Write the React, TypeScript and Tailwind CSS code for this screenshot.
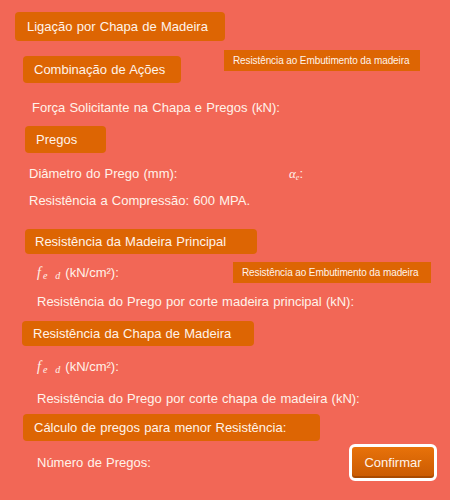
const sans = { fontFamily: '"Liberation Sans", Arial, sans-serif', wordSpacing: "0.6px" };

function Box({ className, children }: { className: string; children: React.ReactNode }) {
  return (
    <div className={"flex items-center whitespace-nowrap rounded-[4px] bg-[#dd6503] text-[13px] text-[#fff3ea] " + className}>
      {children}
    </div>
  );
}

function Tag({ className }: { className: string }) {
  return (
    <div
      className={"flex h-[21px] items-center whitespace-nowrap bg-[#dd6503] pl-[9px] text-[10px] tracking-[-0.1px] text-[#fff3ea] " + className}
      style={{ wordSpacing: "0px" }}
    >
      Resistência ao Embutimento da madeira
    </div>
  );
}

function Line({ className, children }: { className: string; children: React.ReactNode }) {
  return <div className={"flex items-center whitespace-nowrap text-[13px] text-[#fff3ea] " + className}>{children}</div>;
}

function Fed() {
  return (
    <span className="flex items-baseline">
      <span className="font-['Liberation_Serif'] text-[14px] italic">f</span>
      <span className="ml-[2px] translate-y-[2px] font-['Liberation_Serif'] text-[10px] italic">e</span>
      <span className="ml-[8px] translate-y-[2px] font-['Liberation_Serif'] text-[10px] italic">d</span>
      <span className="ml-[5px]">(kN/cm²):</span>
    </span>
  );
}

export default function App() {
  return (
    <div className="h-[500px] w-[450px] overflow-hidden bg-[#f26756]" style={sans}>
      <div className="pt-[12px]">
        <Box className="ml-[15px] h-[29px] w-[210px] pl-[12px]">Ligação por Chapa de Madeira</Box>

        <div className="mt-[9px] flex items-start">
          <Box className="ml-[23px] mt-[6px] h-[27px] w-[158px] pl-[11px]">Combinação de Ações</Box>
          <Tag className="ml-[43px] w-[196px]" />
        </div>

        <Line className="ml-[32px] mt-[17px] h-[16px]">Força Solicitante na Chapa e Pregos (kN):</Line>

        <Box className="ml-[25px] mt-[10px] h-[27px] w-[81px] pl-[11px]">Pregos</Box>

        <Line className="ml-[29px] mt-[13px] h-[16px]">
          <span className="w-[260px]">Diâmetro do Prego (mm):</span>
          <span className="flex items-baseline">
            <span className="font-['Liberation_Serif'] text-[13px] italic">α</span>
            <span className="translate-y-[2px] font-['Liberation_Serif'] text-[8px] italic">e</span>
            <span>:</span>
          </span>
        </Line>

        <Line className="ml-[29px] mt-[11px] h-[16px]">Resistência a Compressão: 600 MPA.</Line>

        <Box className="ml-[25px] mt-[20px] h-[25px] w-[232px] pl-[10px]">Resistência da Madeira Principal</Box>

        <div className="mt-[8px] flex h-[21px] items-center">
          <Line className="ml-[37px] w-[196px]">
            <Fed />
          </Line>
          <Tag className="w-[198px]" />
        </div>

        <Line className="ml-[37px] mt-[11px] h-[16px]">Resistência do Prego por corte madeira principal (kN):</Line>

        <Box className="ml-[22px] mt-[11px] h-[25px] w-[232px] pl-[11px]">Resistência da Chapa de Madeira</Box>

        <Line className="ml-[37px] mt-[12px] h-[16px]">
          <Fed />
        </Line>

        <Line className="ml-[37px] mt-[17px] h-[16px]">Resistência do Prego por corte chapa de madeira (kN):</Line>

        <Box className="ml-[23px] mt-[7px] h-[27px] w-[297px] pl-[11px]">Cálculo de pregos para menor Resistência:</Box>

        <div className="mt-[3px] flex h-[37px] items-center">
          <Line className="ml-[37px] w-[312px]">Número de Pregos:</Line>
          <button className="h-[37px] w-[88px] rounded-[6px] border-[3px] border-white bg-gradient-to-b from-[#e8720a] to-[#c95a02] text-[13px] text-[#fff3ea] shadow-[inset_0_-2px_0_rgba(120,50,0,0.4)]">
            Confirmar
          </button>
        </div>
      </div>
    </div>
  );
}
